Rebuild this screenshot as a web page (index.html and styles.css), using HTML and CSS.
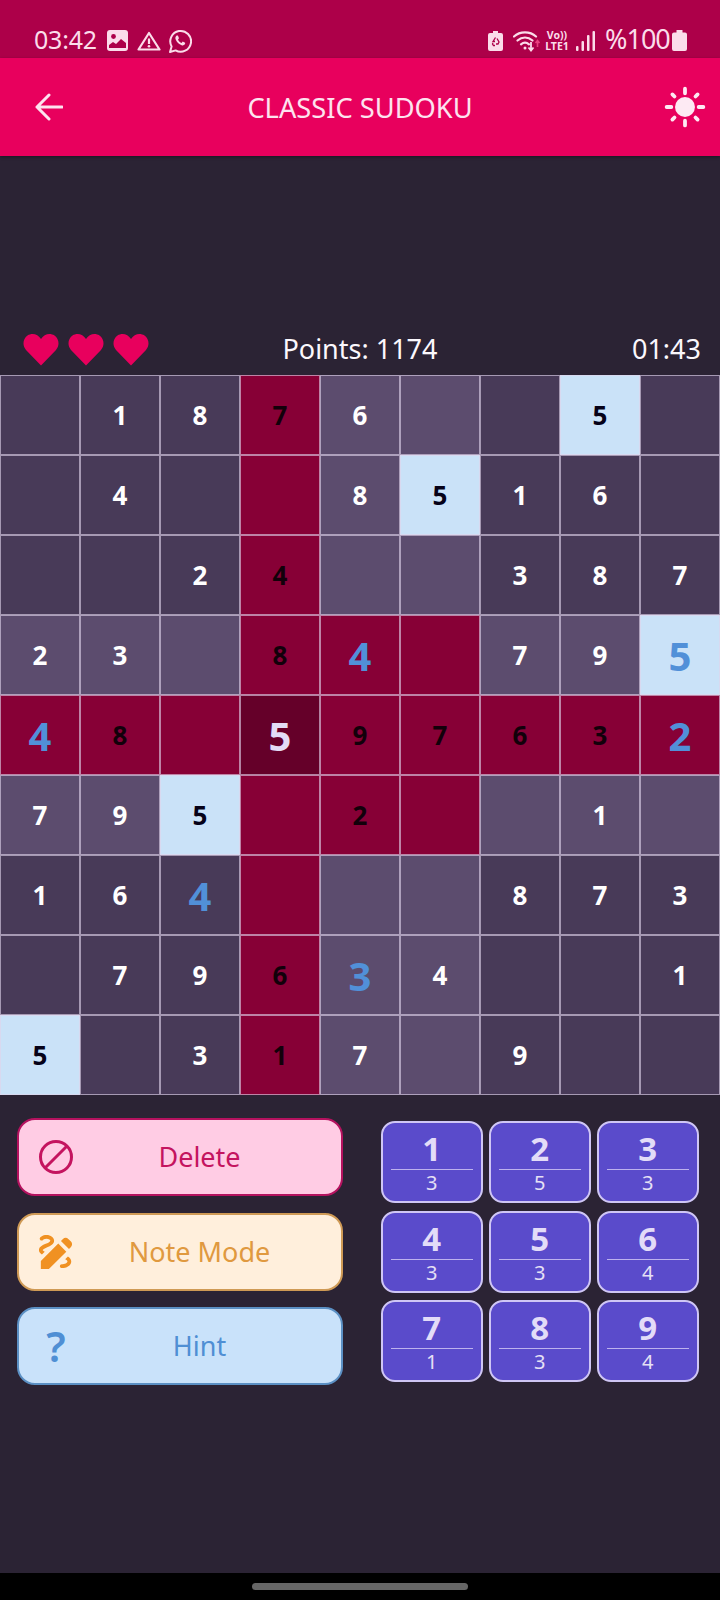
FILE: index.html
```html
<!DOCTYPE html>
<html lang="en">
<head>
<meta charset="utf-8">
<title>Classic Sudoku</title>
<link rel="stylesheet" href="styles.css">
</head>
<body>
<div class="screen">
  <div class="status">
    <div class="status-left">
      <span class="clock">03:42</span>
      <svg class="st-img" viewBox="0 0 21 21"><rect width="21" height="21" rx="3" fill="#fbdcea"/><circle cx="6.5" cy="6.5" r="2.4" fill="#ad0049"/><path d="M2 18v-3l4-3 3 2 5-5 5 4v5z" fill="#ad0049"/></svg>
      <svg class="st-warn" viewBox="0 0 24 20"><path d="M12 2 22.5 18.5H1.5z" fill="none" stroke="#fbdcea" stroke-width="2.2" stroke-linejoin="round"/><path d="M12 7.5v5.5" stroke="#fbdcea" stroke-width="2.2"/><circle cx="12" cy="15.3" r="1.3" fill="#fbdcea"/></svg>
      <svg class="st-wa" viewBox="0 0 24 24"><path d="M2 23l1.6-5.6A10.4 10.4 0 1 1 7.6 21.4z" fill="none" stroke="#fbdcea" stroke-width="2" stroke-linejoin="round"/><path d="M8.4 6.8c-.9.8-1.3 2-.8 3.4 1 2.8 3.400 5 6 6 1.400.5 2.600 0 3.300-.9.300-.5.300-1.100.2-1.500l-2.400-1.200-1.100 1.300c-1.500-.6-2.900-1.900-3.600-3.500l1-1.200-1-2.500c-.5-.3-1.200-.4-1.600.1z" fill="#fbdcea"/></svg>
    </div>
    <div class="status-right">
      <svg class="st-bat1" viewBox="0 0 15 20"><path d="M5 0h5v2h3a2 2 0 0 1 2 2v14a2 2 0 0 1-2 2H2a2 2 0 0 1-2-2V4a2 2 0 0 1 2-2h3z" fill="#fbdcea"/><path d="M7.500 6.500l-2.500 4h2M9 7.500l2 3.500-1 2H8M5 12l-.5 1 1 1.500H7" fill="none" stroke="#ad0049" stroke-width="1.300"/></svg>
      <svg class="st-wifi" viewBox="0 0 28 22"><path d="M1 6.500C7 1 17 1 23 6.500M4.500 10.500c4.500-4 10.500-4 15 0M8 14.300c2.500-2.200 5.500-2.200 8 0" fill="none" stroke="#fbdcea" stroke-width="2.200" stroke-linecap="round"/><circle cx="12" cy="18" r="1.500" fill="#fbdcea"/><path d="M18 12v8M15.500 17.500l2.500 3 2.500-3" fill="none" stroke="#fbdcea" stroke-width="1.800"/><path d="M24.500 17v-6M22.500 13l2-2.500 2 2.500" fill="none" stroke="#e8407f" stroke-width="1.600"/></svg>
      <span class="volte"><span class="vo">Vo))</span><span class="lte">LTE1</span></span>
      <svg class="st-sig" viewBox="0 0 20 20"><rect x="0" y="15" width="2.500" height="5" rx="1" fill="#fbdcea"/><rect x="5.500" y="10" width="2.500" height="10" rx="1" fill="#fbdcea"/><rect x="11" y="4" width="2.500" height="16" rx="1" fill="#fbdcea"/><rect x="16.500" y="0" width="2.500" height="20" rx="1" fill="#fbdcea"/></svg>
      <span class="pct">%100</span>
      <svg class="st-bat2" viewBox="0 0 15 21"><path d="M4.500 0h6v2.500H13a2 2 0 0 1 2 2V19a2 2 0 0 1-2 2H2a2 2 0 0 1-2-2V4.500a2 2 0 0 1 2-2h2.500z" fill="#fbdcea"/></svg>
    </div>
  </div>

  <header class="appbar">
    <svg class="back" viewBox="0 0 28 28"><path d="M27 14H2M14 2 2 14l12 12" fill="none" stroke="#fde3ef" stroke-width="3" stroke-linecap="round" stroke-linejoin="round"/></svg>
    <h1 class="title">CLASSIC SUDOKU</h1>
    <svg class="sun" viewBox="0 0 40 40"><circle cx="20" cy="20" r="9.500" fill="#fdeaf3"/><g stroke="#fdeaf3" stroke-width="3.600" stroke-linecap="round"><path d="M20 2.500v4.500M20 33v4.500M2.500 20H7M33 20h4.500M8 8l2 2M30 30l2 2M8 32l2-2M30 10l2-2"/></g></svg>
  </header>

  <main class="content">
    <div class="info">
      <div class="hearts">
        <svg class="heart" viewBox="0 0 36 32"><path d="M18 32 3 16.500C-1 12 0 5 4.500 2 9-1 15 .5 18 5.500 21 .5 27-1 31.500 2 36 5 37 12 33 16.500z"/></svg>
        <svg class="heart" viewBox="0 0 36 32"><path d="M18 32 3 16.500C-1 12 0 5 4.500 2 9-1 15 .5 18 5.500 21 .5 27-1 31.500 2 36 5 37 12 33 16.500z"/></svg>
        <svg class="heart" viewBox="0 0 36 32"><path d="M18 32 3 16.500C-1 12 0 5 4.500 2 9-1 15 .5 18 5.500 21 .5 27-1 31.500 2 36 5 37 12 33 16.500z"/></svg>
      </div>
      <div class="points">Points: 1174</div>
      <div class="timer">01:43</div>
    </div>

    <div class="board">
      <div class="cell d"></div><div class="cell d">1</div><div class="cell d">8</div><div class="cell r">7</div><div class="cell l">6</div><div class="cell l"></div><div class="cell d"></div><div class="cell s">5</div><div class="cell d"></div>
      <div class="cell d"></div><div class="cell d">4</div><div class="cell d"></div><div class="cell r"></div><div class="cell l">8</div><div class="cell s">5</div><div class="cell d">1</div><div class="cell d">6</div><div class="cell d"></div>
      <div class="cell d"></div><div class="cell d"></div><div class="cell d">2</div><div class="cell r">4</div><div class="cell l"></div><div class="cell l"></div><div class="cell d">3</div><div class="cell d">8</div><div class="cell d">7</div>
      <div class="cell l">2</div><div class="cell l">3</div><div class="cell l"></div><div class="cell r">8</div><div class="cell r big">4</div><div class="cell r"></div><div class="cell l">7</div><div class="cell l">9</div><div class="cell s big">5</div>
      <div class="cell r big">4</div><div class="cell r">8</div><div class="cell r"></div><div class="cell x">5</div><div class="cell r">9</div><div class="cell r">7</div><div class="cell r">6</div><div class="cell r">3</div><div class="cell r big">2</div>
      <div class="cell l">7</div><div class="cell l">9</div><div class="cell s">5</div><div class="cell r"></div><div class="cell r">2</div><div class="cell r"></div><div class="cell l"></div><div class="cell l">1</div><div class="cell l"></div>
      <div class="cell d">1</div><div class="cell d">6</div><div class="cell d big">4</div><div class="cell r"></div><div class="cell l"></div><div class="cell l"></div><div class="cell d">8</div><div class="cell d">7</div><div class="cell d">3</div>
      <div class="cell d"></div><div class="cell d">7</div><div class="cell d">9</div><div class="cell r">6</div><div class="cell l big">3</div><div class="cell l">4</div><div class="cell d"></div><div class="cell d"></div><div class="cell d">1</div>
      <div class="cell s">5</div><div class="cell d"></div><div class="cell d">3</div><div class="cell r">1</div><div class="cell l">7</div><div class="cell l"></div><div class="cell d">9</div><div class="cell d"></div><div class="cell d"></div>
    </div>

    <div class="controls">
      <div class="actions">
        <button class="action del">
          <svg class="a-icon" viewBox="0 0 36 36"><circle cx="18" cy="18" r="15.500" fill="none" stroke="#c4145f" stroke-width="3"/><path d="M7.500 28.500l21-21" stroke="#c4145f" stroke-width="3"/></svg>
          <span class="a-label">Delete</span>
        </button>
        <button class="action note">
          <svg class="a-icon" viewBox="2.500 2.500 19 19"><path fill="#f09122" d="M18.850 10.390l1.060-1.060c.78-.78.78-2.050 0-2.830L18.500 5.090c-.78-.78-2.050-.78-2.830 0l-1.060 1.060 4.240 4.240zm-5.660-2.830L4 16.760V21h4.240l9.190-9.190-4.240-4.250zm6.860 9.440c0 2.190-2.540 3.500-5 3.500-.55 0-1-.45-1-1s.45-1 1-1c1.540 0 3-.73 3-1.500 0-.47-.48-.87-1.230-1.200l1.480-1.480c1.070.63 1.750 1.470 1.750 2.680zM4.580 13.350C3.610 12.790 3 12.060 3 11c0-1.800 1.890-2.630 3.560-3.360C7.590 7.180 9 6.560 9 6c0-.41-.78-1-2-1-1.260 0-1.800.61-1.830.64-.35.41-.98.46-1.400.12-.41-.34-.49-.95-.15-1.380C3.730 4.240 4.760 3 7 3s4 1.320 4 3c0 1.870-1.930 2.720-3.640 3.470C6.420 9.880 5 10.500 5 11c0 .31.43.6 1.070.86l-1.490 1.490z"/></svg>
          <span class="a-label">Note Mode</span>
        </button>
        <button class="action hint">
          <span class="a-icon q">?</span>
          <span class="a-label">Hint</span>
        </button>
      </div>
      <div class="pad">
        <div class="key"><span class="k-num">1</span><span class="k-count">3</span></div>
        <div class="key"><span class="k-num">2</span><span class="k-count">5</span></div>
        <div class="key"><span class="k-num">3</span><span class="k-count">3</span></div>
        <div class="key"><span class="k-num">4</span><span class="k-count">3</span></div>
        <div class="key"><span class="k-num">5</span><span class="k-count">3</span></div>
        <div class="key"><span class="k-num">6</span><span class="k-count">4</span></div>
        <div class="key"><span class="k-num">7</span><span class="k-count">1</span></div>
        <div class="key"><span class="k-num">8</span><span class="k-count">3</span></div>
        <div class="key"><span class="k-num">9</span><span class="k-count">4</span></div>
      </div>
    </div>
  </main>

  <div class="navbar"><div class="pill"></div></div>
</div>
</body>
</html>
```
FILE: styles.css
```css
* { box-sizing: border-box; }
html, body { margin: 0; padding: 0; }
body { background: #2b2334; font-family: "Noto Sans", "Open Sans", sans-serif; }
.screen { width: 720px; height: 1600px; display: flex; flex-direction: column; overflow: hidden; }

.status { height: 58px; background: #ad0049; display: flex; justify-content: space-between; align-items: center; padding: 23px 33px 0 34px; color: #fbdcea; flex: none; }
.status-left, .status-right { display: flex; align-items: center; }
.clock { font-size: 25px; line-height: 30px; height: 34px; width: 73px; letter-spacing: -.2px; }
.st-img { width: 21px; height: 21px; }
.st-warn { width: 24px; height: 20px; margin-left: 9px; }
.st-wa { width: 24px; height: 24px; margin-left: 7px; }
.st-bat1 { width: 15px; height: 20px; }
.st-wifi { width: 28px; height: 22px; margin-left: 10px; }
.volte { display: flex; flex-direction: column; align-items: center; margin-left: 3px; width: 26px; font-weight: 700; font-size: 10.500px; line-height: 11px; }
.vo, .lte { display: block; height: 11px; }
.st-sig { width: 20px; height: 20px; margin-left: 6px; }
.pct { font-size: 27px; line-height: 30px; height: 34px; margin-left: 9px; letter-spacing: -1px; width: 67px; }
.st-bat2 { width: 15px; height: 21px; }

.appbar { height: 98px; background: #e8005d; display: grid; grid-template-columns: 1fr auto 1fr; align-items: center; padding: 0 14px 0 35px; box-shadow: 0 1px 3px rgba(0,0,0,.35); position: relative; flex: none; }
.back { width: 28px; height: 28px; }
.title { margin: 0 21px 0 0; font-size: 27.250px; font-weight: 400; color: #fde3ef; }
.sun { width: 42px; height: 42px; justify-self: end; }

.content { flex: 1; display: flex; flex-direction: column; padding-top: 169px; }
.info { height: 47px; margin-bottom: 3px; display: grid; grid-template-columns: 1fr auto 1fr; align-items: center; padding: 0 19px 0 23px; color: #fbf8fd; font-size: 27px; }
.hearts { display: flex; gap: 9px; padding-top: 2px; }
.heart { width: 36px; height: 33px; fill: #e8005d; }
.points { margin-right: 4px; }
.timer { text-align: right; }

.board { display: grid; grid-template-columns: repeat(9, 80px); grid-auto-rows: 80px; width: 720px; }
.cell { display: flex; align-items: center; justify-content: center; border: 1px solid rgba(225,212,235,.62); font-size: 26px; font-weight: 700; color: #fff; }
.d { background: #483a58; }
.l { background: #5c4c6e; }
.r { background: #870036; color: #12000a; }
.s { background: #cae2f8; color: #060218; }
.x { background: #650029; color: #e3dcf6; font-size: 40px; font-weight: 700; }
.big, .r.big, .s.big { color: #5190d8; font-size: 40px; font-weight: 700; }

.controls { display: grid; grid-template-columns: 326px 318px; justify-content: start; column-gap: 38px; padding: 23px 0 0 17px; }
.actions { display: flex; flex-direction: column; gap: 16.500px; }
.action { height: 78px; display: flex; align-items: center; padding: 0 16px 0 19px; border-radius: 18px; border: 2px solid; font: inherit; font-size: 27px; }
.a-icon { width: 36px; height: 36px; flex: none; }
.a-label { flex: 1; text-align: center; margin-top: -1px; }
.del { background: #ffcce4; border-color: #b5125f; color: #c4145f; }
.note { background: #ffefdc; border-color: #cf9a55; color: #e0993f; }
.hint { background: #c9e2fa; border-color: #5b90c4; color: #4f8fd4; }
.q { font-size: 42px; line-height: 36px; font-weight: 600; text-align: center; }

.pad { display: grid; grid-template-columns: repeat(3, 101.500px); grid-auto-rows: 82px; gap: 7.500px 6.500px; padding-top: 3px; }
.key { background: #5a4bcb; border: 2px solid #cfc6f5; border-radius: 14px; display: flex; flex-direction: column; align-items: center; padding: 0 8px; }
.k-num { width: 100%; height: 47px; border-bottom: 1px solid #bdb2ee; text-align: center; font-size: 33px; line-height: 52px; font-weight: 700; color: #e3dcf8; flex: none; }
.k-count { font-size: 20px; line-height: 26px; color: #e5e0f5; }

.navbar { height: 27px; background: #000; display: flex; justify-content: center; align-items: flex-start; padding-top: 10px; flex: none; }
.pill { width: 216px; height: 7px; border-radius: 4px; background: #666; }
```
